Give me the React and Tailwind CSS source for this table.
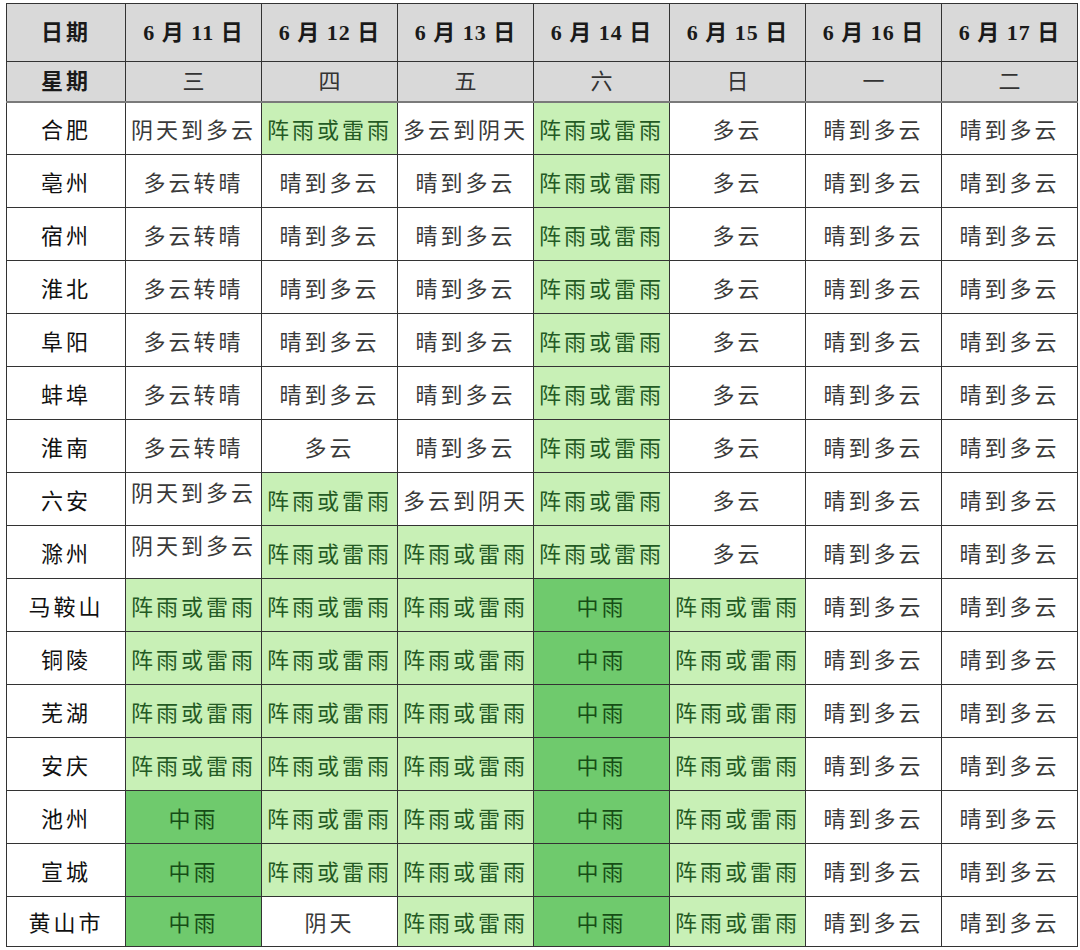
const days = ['6月 11日', '6月 12日', '6月 13日', '6月 14日', '6月 15日', '6月 16日', '6月 17日'];
const weekdays = ['三', '四', '五', '六', '日', '一', '二'];

const Q = '晴到多云';
const L = 'L';
const D = 'D';

// each cell: [text, kind]  kind: w = white, L = light green, D = dark green, t = white top-aligned
const rows = [
  ['合肥', [['阴天到多云', 'w'], ['阵雨或雷雨', L], ['多云到阴天', 'w'], ['阵雨或雷雨', L], ['多云', 'w'], [Q, 'w'], [Q, 'w']]],
  ['亳州', [['多云转晴', 'w'], [Q, 'w'], [Q, 'w'], ['阵雨或雷雨', L], ['多云', 'w'], [Q, 'w'], [Q, 'w']]],
  ['宿州', [['多云转晴', 'w'], [Q, 'w'], [Q, 'w'], ['阵雨或雷雨', L], ['多云', 'w'], [Q, 'w'], [Q, 'w']]],
  ['淮北', [['多云转晴', 'w'], [Q, 'w'], [Q, 'w'], ['阵雨或雷雨', L], ['多云', 'w'], [Q, 'w'], [Q, 'w']]],
  ['阜阳', [['多云转晴', 'w'], [Q, 'w'], [Q, 'w'], ['阵雨或雷雨', L], ['多云', 'w'], [Q, 'w'], [Q, 'w']]],
  ['蚌埠', [['多云转晴', 'w'], [Q, 'w'], [Q, 'w'], ['阵雨或雷雨', L], ['多云', 'w'], [Q, 'w'], [Q, 'w']]],
  ['淮南', [['多云转晴', 'w'], ['多云', 'w'], [Q, 'w'], ['阵雨或雷雨', L], ['多云', 'w'], [Q, 'w'], [Q, 'w']]],
  ['六安', [['阴天到多云', 't'], ['阵雨或雷雨', L], ['多云到阴天', 'w'], ['阵雨或雷雨', L], ['多云', 'w'], [Q, 'w'], [Q, 'w']]],
  ['滁州', [['阴天到多云', 't'], ['阵雨或雷雨', L], ['阵雨或雷雨', L], ['阵雨或雷雨', L], ['多云', 'w'], [Q, 'w'], [Q, 'w']]],
  ['马鞍山', [['阵雨或雷雨', L], ['阵雨或雷雨', L], ['阵雨或雷雨', L], ['中雨', D], ['阵雨或雷雨', L], [Q, 'w'], [Q, 'w']]],
  ['铜陵', [['阵雨或雷雨', L], ['阵雨或雷雨', L], ['阵雨或雷雨', L], ['中雨', D], ['阵雨或雷雨', L], [Q, 'w'], [Q, 'w']]],
  ['芜湖', [['阵雨或雷雨', L], ['阵雨或雷雨', L], ['阵雨或雷雨', L], ['中雨', D], ['阵雨或雷雨', L], [Q, 'w'], [Q, 'w']]],
  ['安庆', [['阵雨或雷雨', L], ['阵雨或雷雨', L], ['阵雨或雷雨', L], ['中雨', D], ['阵雨或雷雨', L], [Q, 'w'], [Q, 'w']]],
  ['池州', [['中雨', D], ['阵雨或雷雨', L], ['阵雨或雷雨', L], ['中雨', D], ['阵雨或雷雨', L], [Q, 'w'], [Q, 'w']]],
  ['宣城', [['中雨', D], ['阵雨或雷雨', L], ['阵雨或雷雨', L], ['中雨', D], ['阵雨或雷雨', L], [Q, 'w'], [Q, 'w']]],
  ['黄山市', [['中雨', D], ['阴天', 'w'], ['阵雨或雷雨', L], ['中雨', D], ['阵雨或雷雨', L], [Q, 'w'], [Q, 'w']]],
];

function cellClass(kind) {
  if (kind === L) return 'bg-[#c8f0b6] text-[#245a24] align-middle';
  if (kind === D) return 'bg-[#6fca6d] text-[#164d16] align-middle';
  if (kind === 't') return 'bg-white text-[#3a3a3a] align-top pt-[2px]';
  return 'bg-white text-[#3a3a3a] align-middle';
}

export default function App() {
  return (
    <div className="min-h-screen bg-white pl-[6px] pt-[3px]">
      <table
        className="table-fixed border-collapse w-[1071px] border border-[#333] text-center"
        style={{ fontFamily: '"Liberation Serif", "Noto Sans CJK SC", serif' }}
      >
        <colgroup>
          <col className="w-[119px]" />
          {days.map((d) => (
            <col key={d} className="w-[136px]" />
          ))}
        </colgroup>
        <thead>
          <tr className="h-[58px] bg-[#d9d9d9]">
            <th className="border border-[#333] text-[22px] font-bold text-[#1a1a1a] tracking-[3px]">日期</th>
            {days.map((d) => (
              <th key={d} className="border border-[#333] text-[22px] font-bold text-[#1a1a1a] tracking-[1px] whitespace-pre">
                {d.replace('月 ', ' 月 ').replace('日', ' 日')}
              </th>
            ))}
          </tr>
          <tr className="h-[40px] bg-[#d9d9d9]">
            <th className="border border-[#333] border-b-2 border-b-[#7a7a7a] text-[22px] font-bold text-[#1a1a1a] tracking-[3px]">星期</th>
            {weekdays.map((w) => (
              <th key={w} className="border border-[#333] border-b-2 border-b-[#7a7a7a] text-[22px] font-normal text-[#333]">
                {w}
              </th>
            ))}
          </tr>
        </thead>
        <tbody style={{ fontFamily: '"Noto Sans CJK SC", sans-serif' }}>
          {rows.map(([city, cells], i) => (
            <tr key={city} className={i === rows.length - 1 ? 'h-[50px]' : 'h-[53px]'}>
              <td className="border border-[#333] bg-white text-[22px] font-normal text-[#111] tracking-[3px]">{city}</td>
              {cells.map(([text, kind], j) => (
                <td
                  key={j}
                  className={`border border-[#333] text-[22px] font-normal tracking-[3px] whitespace-nowrap ${cellClass(kind)}`}
                >
                  {text}
                </td>
              ))}
            </tr>
          ))}
        </tbody>
      </table>
    </div>
  );
}
